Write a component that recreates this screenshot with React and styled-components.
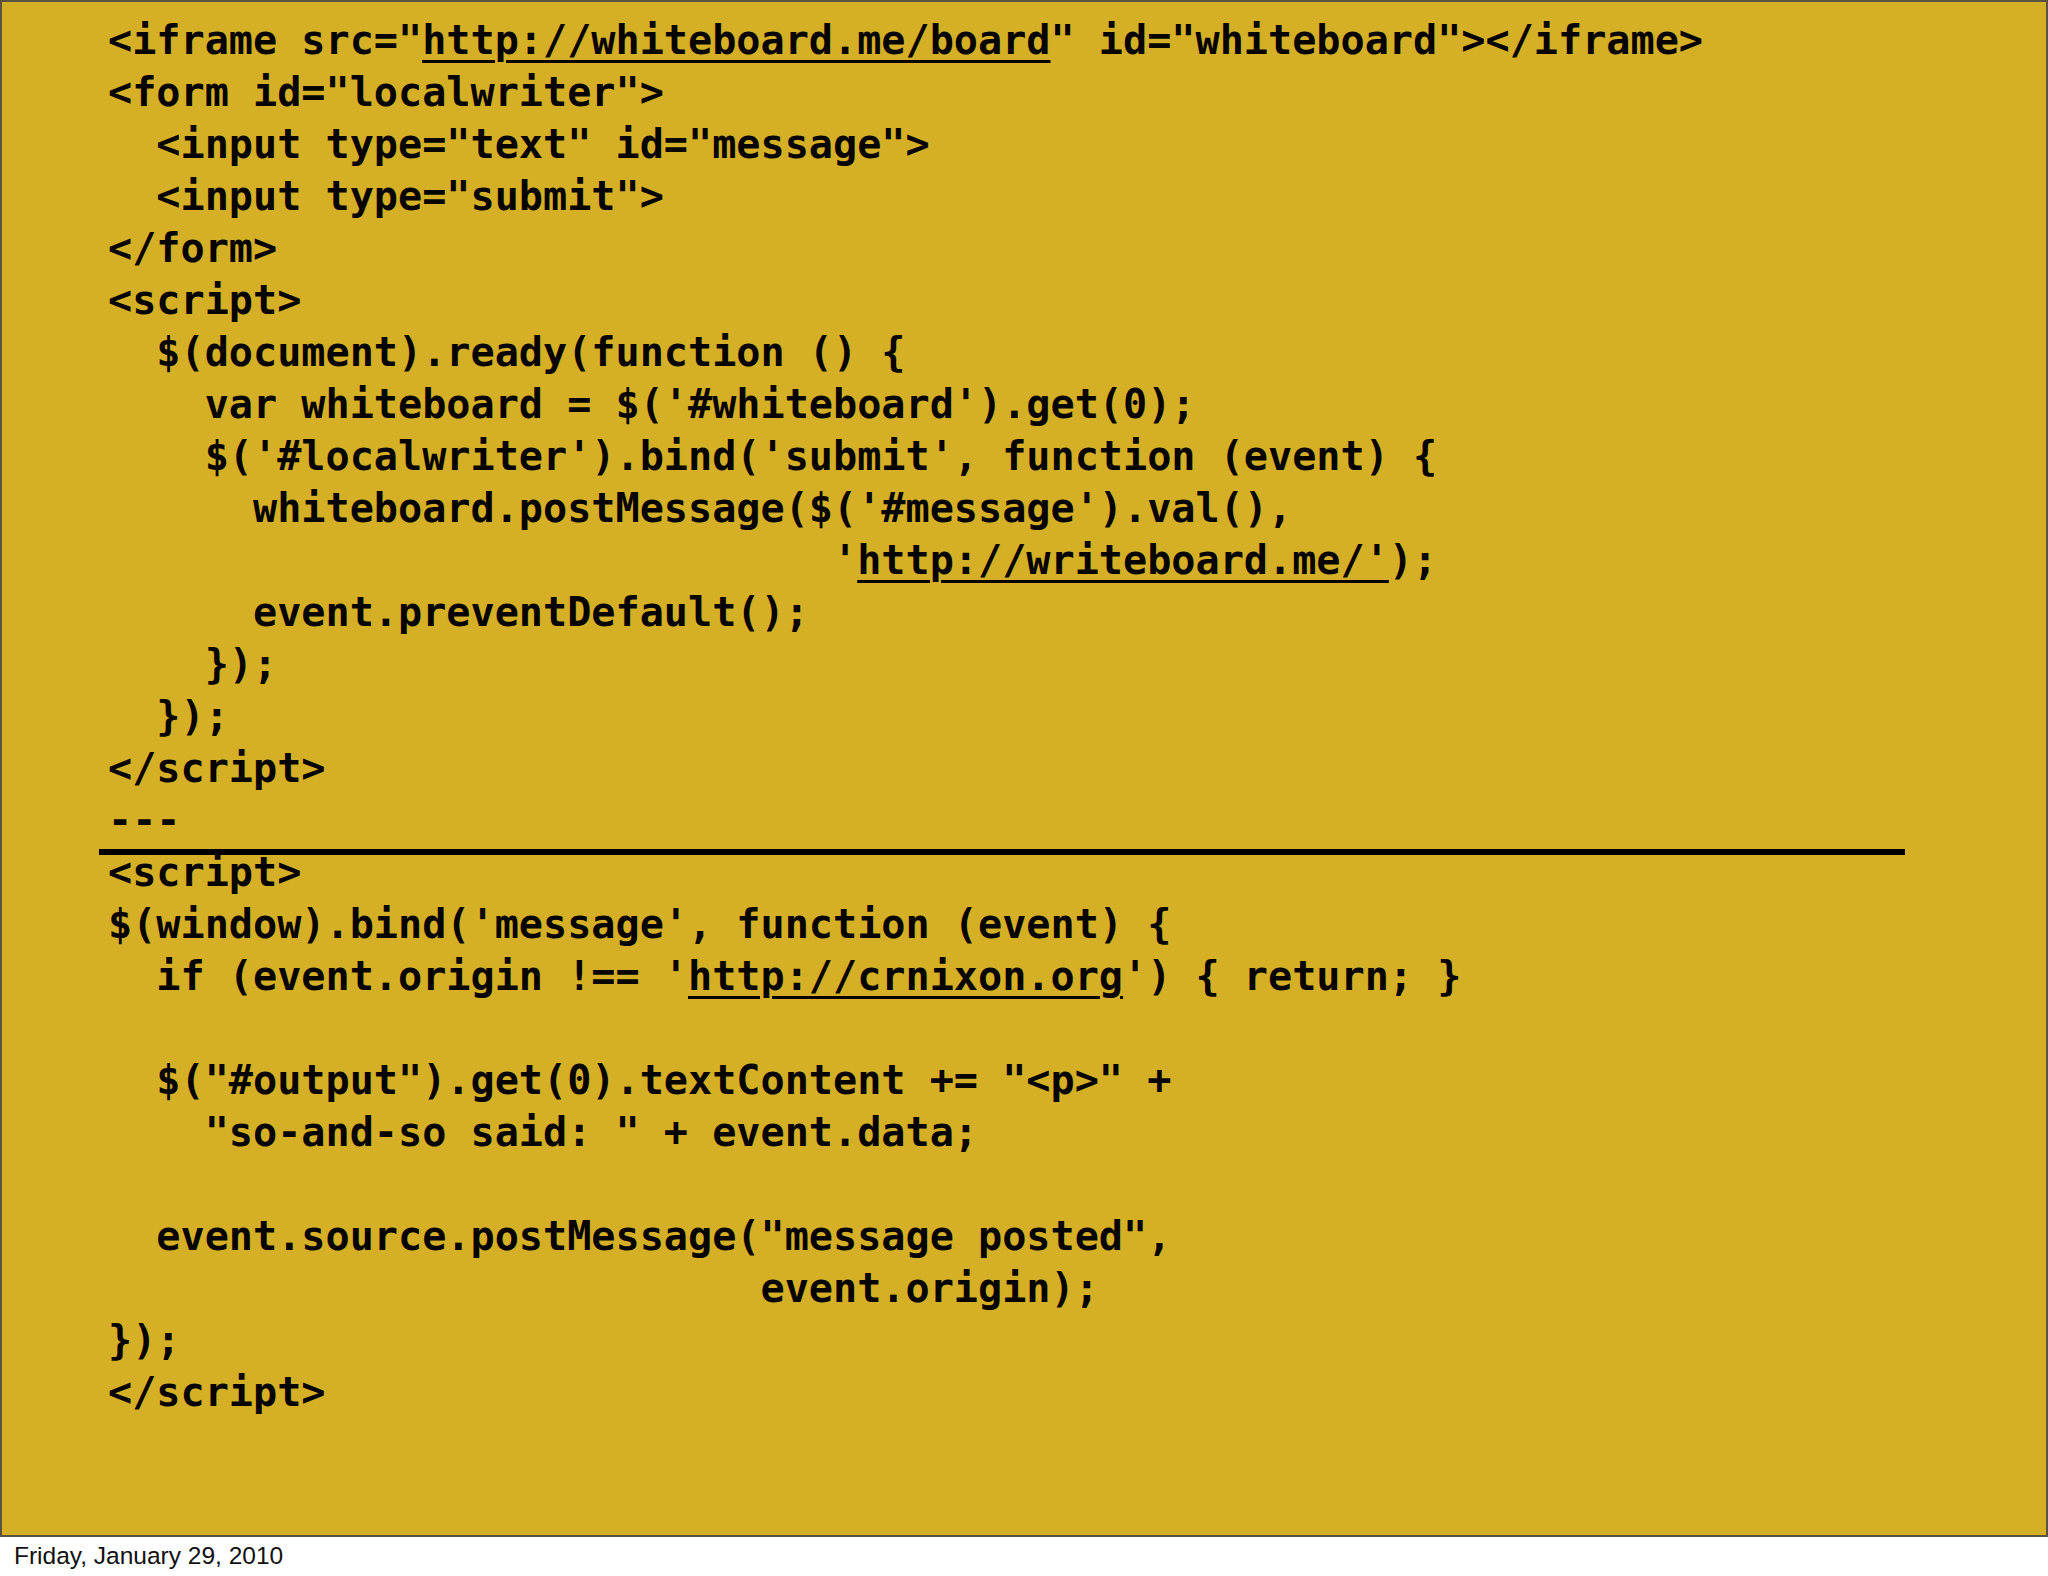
import React from "react";
import styled, { createGlobalStyle } from "styled-components";

const GlobalStyle = createGlobalStyle`
  html, body {
    margin: 0;
    padding: 0;
    background: #ffffff;
  }
`;

const Page = styled.div`
  width: 2048px;
  display: flex;
  flex-direction: column;
`;

const Slide = styled.section`
  position: relative;
  box-sizing: border-box;
  width: 2048px;
  height: 1537px;
  background: #d5af26;
  border: 2px solid #5b5340;
  padding: 12px 0 0 106px;
`;

const Code = styled.div`
  font-family: "DejaVu Sans Mono", "Liberation Mono", monospace;
  font-weight: bold;
  font-size: 40.15px;
  line-height: 52px;
  color: #050400;
`;

const Line = styled.div`
  white-space: pre;
  height: 52px;
`;

const Link = styled.span`
  text-decoration: underline;
  text-decoration-thickness: 3px;
  text-underline-offset: 6px;
`;

const Rule = styled.div`
  position: absolute;
  left: 97px;
  top: 847px;
  width: 1806px;
  height: 6px;
  background: #000;
`;

const Footer = styled.footer`
  font-family: "Liberation Sans", Arial, sans-serif;
  font-size: 24.5px;
  line-height: 38px;
  color: #111;
  padding-left: 14px;
`;

const L = (t) => ({ link: t });

const lines = [
  [`<iframe src="`, L(`http://whiteboard.me/board`), `" id="whiteboard"></iframe>`],
  [`<form id="localwriter">`],
  [`  <input type="text" id="message">`],
  [`  <input type="submit">`],
  [`</form>`],
  [`<script>`],
  [`  $(document).ready(function () {`],
  [`    var whiteboard = $('#whiteboard').get(0);`],
  [`    $('#localwriter').bind('submit', function (event) {`],
  [`      whiteboard.postMessage($('#message').val(),`],
  [`                              '`, L(`http://writeboard.me/'`), `);`],
  [`      event.preventDefault();`],
  [`    });`],
  [`  });`],
  [`</script>`],
  [`---`],
  [`<script>`],
  [`$(window).bind('message', function (event) {`],
  [`  if (event.origin !== '`, L(`http://crnixon.org`), `') { return; }`],
  [``],
  [`  $("#output").get(0).textContent += "<p>" +`],
  [`    "so-and-so said: " + event.data;`],
  [``],
  [`  event.source.postMessage("message posted",`],
  [`                           event.origin);`],
  [`});`],
  [`</script>`],
];

export default function App() {
  return (
    <Page>
      <GlobalStyle />
      <Slide>
        <Code>
          {lines.map((segs, i) => (
            <Line key={i}>
              {segs.map((s, j) =>
                typeof s === "string" ? (
                  <React.Fragment key={j}>{s}</React.Fragment>
                ) : (
                  <Link key={j}>{s.link}</Link>
                )
              )}
            </Line>
          ))}
        </Code>
        <Rule />
      </Slide>
      <Footer>Friday, January 29, 2010</Footer>
    </Page>
  );
}
